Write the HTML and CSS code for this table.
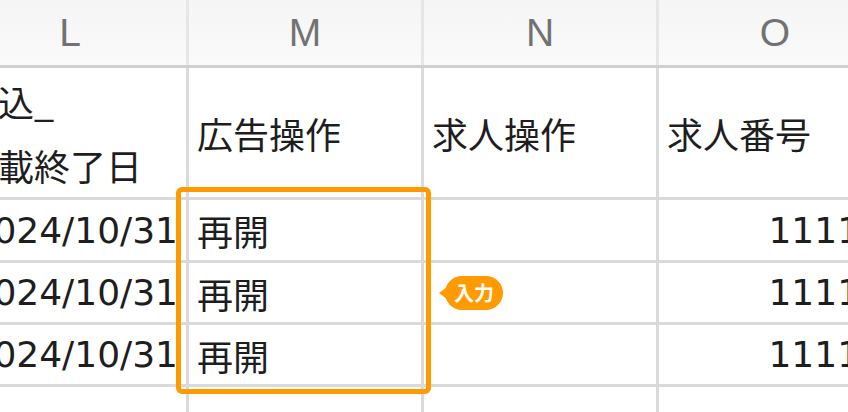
FILE: index.html
```html
<!DOCTYPE html>
<html lang="ja">
<head>
<meta charset="utf-8">
<title>Sheet</title>
<link rel="stylesheet" href="styles.css">
</head>
<body>
<div class="sheet">
  <div class="head">
    <div class="hcell">L</div>
    <div class="hcell">M</div>
    <div class="hcell">N</div>
    <div class="hcell">O</div>
  </div>
  <div class="rows">
    <div class="row tall">
      <div class="cell multi"><span>申込_</span><span>掲載終了日</span></div>
      <div class="cell">広告操作</div>
      <div class="cell">求人操作</div>
      <div class="cell">求人番号</div>
    </div>
    <div class="row">
      <div class="cell num">2024/10/31</div>
      <div class="cell anchor">再開<div class="selection"></div></div>
      <div class="cell"></div>
      <div class="cell num">11111</div>
    </div>
    <div class="row">
      <div class="cell num">2024/10/31</div>
      <div class="cell">再開</div>
      <div class="cell"><span class="badge">入力</span></div>
      <div class="cell num">11111</div>
    </div>
    <div class="row">
      <div class="cell num">2024/10/31</div>
      <div class="cell">再開</div>
      <div class="cell"></div>
      <div class="cell num">11111</div>
    </div>
    <div class="row last">
      <div class="cell"></div>
      <div class="cell"></div>
      <div class="cell"></div>
      <div class="cell"></div>
    </div>
  </div>
</div>
</body>
</html>
```

FILE: styles.css
```css
html, body {
  margin: 0;
  padding: 0;
  background: #ffffff;
  overflow: hidden;
  width: 848px;
  height: 412px;
}

.sheet {
  margin-left: -46px;
  width: max-content;
}

.head {
  display: grid;
  grid-template-columns: repeat(4, 232px);
  column-gap: 3px;
  height: 65px;
  background: #e6e6e6;
  border-bottom: 3px solid #cfcfcf;
}

.hcell {
  display: flex;
  align-items: center;
  justify-content: center;
  background: linear-gradient(#f5f5f5, #fafafa);
  font-family: "Liberation Sans", Arial, sans-serif;
  font-size: 39px;
  color: #727272;
}

.rows {
  display: flex;
  flex-direction: column;
  gap: 3px;
  background: #dadada;
}

.row {
  display: flex;
  gap: 3px;
  height: 59px;
}

.row:nth-child(2) {
  height: 60px;
}

.row.tall {
  height: 129px;
}

.row.last {
  height: 40px;
}

.cell {
  flex: 0 0 232px;
  box-sizing: border-box;
  background: #ffffff;
  display: flex;
  align-items: center;
  padding: 0 8px;
  font-family: "Noto Sans CJK JP", sans-serif;
  font-size: 36px;
  color: #1e1e1e;
  white-space: nowrap;
  overflow: hidden;
}

.num {
  justify-content: flex-end;
  font-family: "DejaVu Sans", "Noto Sans CJK JP", sans-serif;
  font-size: 36px;
}

.multi {
  flex-direction: column;
  align-items: flex-start;
  justify-content: center;
  line-height: 64px;
}

.anchor {
  position: relative;
  overflow: visible;
}

.selection {
  position: absolute;
  left: -13px;
  top: -13px;
  width: 255px;
  height: 207px;
  box-sizing: border-box;
  border: 5px solid #ff9a00;
  border-radius: 6px;
  z-index: 2;
  pointer-events: none;
}

.badge {
  position: relative;
  margin-left: 13px;
  height: 34px;
  line-height: 34px;
  padding: 0 9px;
  border-radius: 17px;
  background: #ff9a00;
  color: #ffffff;
  font-family: "Noto Sans CJK JP", sans-serif;
  font-weight: 700;
  font-size: 20px;
}

.badge::before {
  content: "";
  position: absolute;
  left: -6px;
  top: 50%;
  margin-top: -6px;
  border-top: 6px solid transparent;
  border-bottom: 6px solid transparent;
  border-right: 8px solid #ff9a00;
}
```
